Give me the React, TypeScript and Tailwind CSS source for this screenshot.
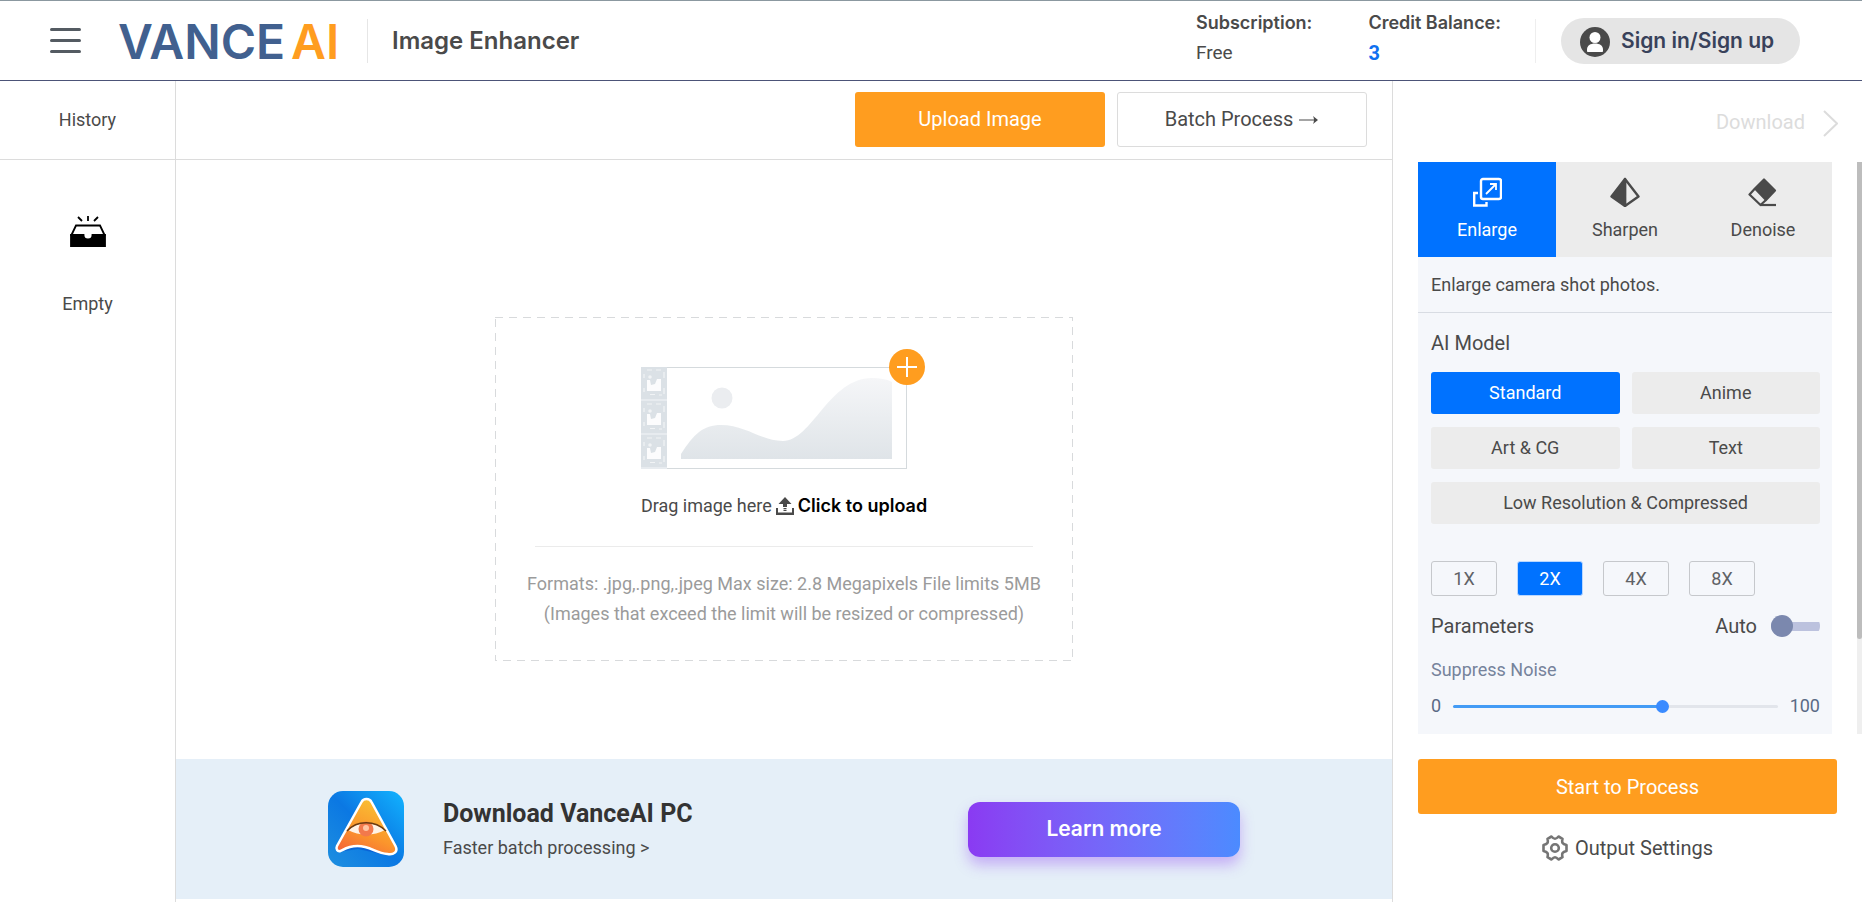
import { useState } from "react"

const headingFont = "font-['Inter',sans-serif]"

const tools = [
  { name: "Enlarge", Icon: EnlargeIcon },
  { name: "Sharpen", Icon: SharpenIcon },
  { name: "Denoise", Icon: DenoiseIcon },
]

const models = ["Standard", "Anime", "Art & CG", "Text", "Low Resolution & Compressed"]
const scales = ["1X", "2X", "4X", "8X"]

function EnlargeIcon() {
  return (
    <svg className="size-[30px]" viewBox="0 0 30 30" fill="none" stroke="currentColor" strokeWidth="2.400">
      <rect x="9" y="2" width="20" height="20" rx="2" />
      <path d="M6 16H2.200v12.500h12.300V25" />
      <path d="M14 17 24 7M18 7h6v6" strokeWidth="1.800" />
    </svg>
  )
}

function SharpenIcon() {
  return (
    <svg className="size-[30px]" viewBox="0 0 30 30" stroke="currentColor" strokeWidth="2.400" strokeLinejoin="round">
      <path d="M15 2 1.500 19.500 15 29Z" fill="currentColor" />
      <path d="M15 2l13.500 17.500L15 29Z" fill="none" />
    </svg>
  )
}

function DenoiseIcon() {
  return (
    <svg className="size-[30px]" viewBox="0 0 30 30" fill="none" stroke="currentColor" strokeWidth="2.200" strokeLinejoin="round">
      <path d="M16 2.500 27 13.500 18 23 7 11.500Z" fill="currentColor" />
      <path d="M7 11.500 1.500 17.500 12.500 28l5.500-5" />
      <path d="M12.500 28H28" />
    </svg>
  )
}

function InboxIcon() {
  return (
    <svg className="size-9" viewBox="0 0 36 36" fill="none" stroke="#000" strokeWidth="1.800">
      <path d="M1 19v11h34V19H22.500c0 6-9 6-9 0Z" fill="#000" />
      <path d="M1 20 6 9.500h24L35 20" />
      <path d="M18 -1v6M8 1l4 4M28 1l-4 4" />
    </svg>
  )
}

function UserIcon() {
  return (
    <svg className="mt-[3px] size-[30px] text-[#4a4a4a]" viewBox="0 0 30 30">
      <circle cx="15" cy="15" r="15" fill="currentColor" />
      <circle cx="15" cy="10.500" r="5.500" fill="#fff" />
      <path d="M7 24v-1.500c0-4 3.500-6 8-6s8 2 8 6V24c0 .700-.500 1-1 1H8c-.500 0-1-.300-1-1Z" fill="#fff" />
    </svg>
  )
}

function UploadIcon() {
  return (
    <svg className="size-[18px] text-[#4a4a4a]" viewBox="0 0 18 18" fill="currentColor">
      <path d="M9 0 15.500 7H11v3H7V7H2.500Z" />
      <path d="M7.500 11h3v1.200h-3zM7.500 13h3v1h-3z" />
      <path d="M0 11h2v4.500h14V11h2v7H0Z" />
    </svg>
  )
}

function GearIcon() {
  return (
    <svg className="size-[26px]" viewBox="0 0 26 26" fill="none" stroke="#757575" strokeWidth="2.600" strokeLinejoin="round">
      <path d="M9.500 1.500q2 2.300 3.500 2.300t3.500-2.300l4 2.300q-.700 3 .100 4.200t3.900 2v6q-3.100.800-3.900 2t-.100 4.200l-4 2.300q-2-2.300-3.500-2.300t-3.500 2.300l-4-2.300q.700-3-.100-4.200t-3.900-2v-6q3.100-.800 3.900-2t.100-4.200Z" />
      <circle cx="13" cy="13" r="3.800" />
    </svg>
  )
}

function FilmFrame({ y }: { y: number }) {
  return (
    <g transform={`translate(0 ${y})`} fill="#fff">
      <path d="M0 33.500h26v1H0z" opacity=".7" />
      <path d="M6 14h3l1 5 4-1 2-5h4v12H6z" opacity=".9" />
      <circle cx="9" cy="11" r="1.800" opacity=".6" />
      <path d="M6 4h5M15 4h5M3 8v4M3 22v4M23 6v6M23 22v6M9 28.500h5M18 29h3" fill="none" stroke="#fff" strokeWidth="1.200" opacity=".6" />
    </g>
  )
}

function PictureArt() {
  return (
    <svg className="h-[121px] w-[286px]" viewBox="0 0 286 121">
      <defs>
        <linearGradient id="hill" x1="0" y1="0" x2="0" y2="1">
          <stop offset="0" stopColor="#f5f6f8" />
          <stop offset="1" stopColor="#dfe4e8" />
        </linearGradient>
      </defs>
      <rect x=".5" y="18.500" width="265" height="101" fill="#fff" stroke="#d5dadd" />
      <rect y="18" width="26" height="102" fill="#dbe1e6" />
      <FilmFrame y={17} />
      <FilmFrame y={51} />
      <FilmFrame y={85} />
      <circle cx="81" cy="49" r="10.500" fill="#ebedf0" />
      <path d="M40 110v-5C53 85 62 76 80 76c25 0 40 16 62 16 29 0 46-63 89-63 8 0 14 1 20 4v77Z" fill="url(#hill)" />
      <circle cx="266" cy="18" r="18" fill="#ff9d1f" />
      <path d="M256 18h20M266 8v20" stroke="#fff" strokeWidth="2" />
    </svg>
  )
}

function AppLogo() {
  return (
    <svg className="size-[76px]" viewBox="0 0 76 76">
      <defs>
        <linearGradient id="tile" x1="0" y1="1" x2="1" y2="0">
          <stop offset="0" stopColor="#1e8fe0" />
          <stop offset=".5" stopColor="#0b78e3" />
          <stop offset="1" stopColor="#12b4ff" />
        </linearGradient>
        <linearGradient id="peak" x1="0.100" y1="1" x2=".6" y2="0">
          <stop offset="0" stopColor="#f4603a" />
          <stop offset=".45" stopColor="#fb952c" />
          <stop offset="1" stopColor="#f9c034" />
        </linearGradient>
      </defs>
      <rect width="76" height="76" rx="15" fill="url(#tile)" />
      <path d="M45 12 67 54 58 64 30 58 10 61Z" fill="#0649c9" opacity=".5" />
      <path
        d="M33.500 11c2-4 8-4 10 0l24 44c3 6-2 9-8 8-12-1-17-8-30-8-9 0-13 3-17 5-3 1-5-2-3.500-5Z"
        fill="url(#peak)"
        stroke="#fff"
        strokeWidth="2.500"
      />
      <path d="M20 39c10-9 26-9 37 0-11 6-26 6-37 0Z" fill="#fff2e5" />
      <circle cx="38" cy="38" r="7.500" fill="#f2794c" />
      <circle cx="38" cy="37" r="3" fill="#ffc5a3" />
      <path d="M19 40c10-11 28-11 39 0" fill="none" stroke="#6b3b12" strokeWidth="1.500" />
    </svg>
  )
}

function Header() {
  return (
    <header className="flex h-[81px] items-center border-t border-b border-t-[#8b98a0] border-b-[#4c5478] pr-[62px] pl-[50px]">
      <button aria-label="Menu" className="flex w-[31px] flex-col gap-2">
        <span className="h-[3px] rounded-full bg-[#545b62]" />
        <span className="h-[3px] rounded-full bg-[#545b62]" />
        <span className="h-[3px] rounded-full bg-[#545b62]" />
      </button>
      <a href="#" className={`ml-[37px] flex w-[225px] gap-[6px] pt-[2px] text-[48px] leading-none font-semibold text-[#41608f] ${headingFont}`}>
        <span>VANCE</span>
        <span className="text-[#ff9d1f]">AI</span>
      </a>
      <div className="ml-6 h-[44px] w-px bg-[#e6e6e6]" />
      <h1 className={`ml-6 text-[24px] font-semibold ${headingFont}`}>Image Enhancer</h1>
      <div className="ml-auto flex items-center">
        <dl className="flex gap-14 pb-[6px]">
          <div>
            <dt className={`text-[18px] leading-[30px] font-semibold ${headingFont}`}>Subscription:</dt>
            <dd className="text-[19px] leading-[30px]">Free</dd>
          </div>
          <div>
            <dt className={`text-[18px] leading-[30px] font-semibold ${headingFont}`}>Credit Balance:</dt>
            <dd className="text-[20px] leading-[30px] font-bold text-[#0f6ff0]">3</dd>
          </div>
        </dl>
        <div className="ml-[34px] h-[44px] w-px bg-[#eee]" />
        <button className="ml-[25px] flex h-[46px] w-[239px] items-center gap-[11px] rounded-full bg-[#e5e5e5] pl-[19px]">
          <UserIcon />
          <span className={`text-[21px] font-semibold text-[#38415a] ${headingFont}`}>Sign in/Sign up</span>
        </button>
      </div>
    </header>
  )
}

function History() {
  return (
    <aside className="w-44 shrink-0 border-r border-[#dcdcdc] text-center text-[18px]">
      <h2 className="flex h-[79px] items-center justify-center border-b border-[#dcdcdc] pb-[2px]">History</h2>
      <div className="flex flex-col items-center gap-10 pt-14">
        <InboxIcon />
        <p className="leading-6">Empty</p>
      </div>
    </aside>
  )
}

function DropZone() {
  return (
    <div className="relative flex w-[578px] flex-col items-center px-10 pt-8 pb-8">
      <svg aria-hidden="true" className="pointer-events-none absolute inset-0 h-full w-full">
        <rect width="100%" height="100%" fill="none" stroke="#d8dadc" strokeWidth="2" strokeDasharray="8 6" />
      </svg>
      <PictureArt />
      <label className="mt-5 flex cursor-pointer items-center gap-1 text-[18px] leading-8">
        Drag image here
        <UploadIcon />
        <span className={`font-semibold text-black ${headingFont}`}>Click to upload</span>
        <input type="file" className="sr-only" />
      </label>
      <div className="mt-6 flex w-full flex-col items-center border-t border-[#ebebeb] pt-[22px] text-[18px] leading-[30px] whitespace-nowrap text-[#9b9b9b]">
        <p>Formats: .jpg,.png,.jpeg Max size: 2.8 Megapixels File limits 5MB</p>
        <p>(Images that exceed the limit will be resized or compressed)</p>
      </div>
    </div>
  )
}

function Workspace() {
  return (
    <main className="flex min-w-0 flex-1 flex-col pb-[3px]">
      <div className="flex h-[79px] shrink-0 items-center justify-end gap-3 border-b border-[#dcdcdc] pr-[25px] pb-[2px] text-[20px]">
        <button className="h-[55px] w-[250px] rounded-[3px] bg-[#ff9d1f] text-white">Upload Image</button>
        <button className="flex h-[55px] w-[250px] items-center justify-center gap-[6px] rounded-[3px] border border-[#dcdcdc]">
          Batch Process
          <svg className="h-3 w-5" viewBox="0 0 20 12" fill="none" stroke="currentColor">
            <path d="M0 7h18" />
            <path d="M14 3 19 7l-5 4Q16 7 14 3Z" fill="currentColor" stroke="none" />
          </svg>
        </button>
      </div>
      <div className="flex flex-1 items-center justify-center pt-[59px]">
        <DropZone />
      </div>
      <section className="flex h-[140px] items-center bg-[#e5eff8] px-[152px]">
        <AppLogo />
        <div className="ml-[39px]">
          <h2 className="text-[25px] leading-8 font-bold text-[#333]">Download VanceAI PC</h2>
          <a href="#" className="mt-[6px] block text-[18px] leading-6">Faster batch processing &gt;</a>
        </div>
        <button className={`ml-auto h-[55px] w-[272px] rounded-xl bg-linear-to-r from-[#8a3af2] to-[#4b8bff] text-[21px] font-semibold text-white shadow-[0_8px_14px_rgba(138,58,242,0.35)] ${headingFont}`}>
          Learn more
        </button>
      </section>
    </main>
  )
}

function Settings() {
  const [tool, setTool] = useState("Enlarge")
  const [model, setModel] = useState("Standard")
  const [scale, setScale] = useState("2X")
  const [auto, setAuto] = useState(false)
  const [noise, setNoise] = useState(65)

  return (
    <aside className="flex w-[470px] shrink-0 flex-col border-l border-[#dcdcdc] pl-[25px]">
      <button disabled className="flex h-[81px] items-center justify-end gap-[18px] pr-6 text-[20px] text-[#dcdcdc]">
        Download
        <svg className="mt-1 h-[27px] w-[15px]" viewBox="0 0 15 27" fill="none" stroke="currentColor" strokeWidth="2">
          <path d="M1 1 14 13.500 1 26" />
        </svg>
      </button>
      <div className="flex flex-1 justify-between">
        <div className="w-[414px] bg-[#f5f7fb]">
          <div className="grid grid-cols-3 bg-[#ececec]">
            {tools.map(({ name, Icon }) => (
              <button
                key={name}
                onClick={() => setTool(name)}
                className={`flex h-[95px] flex-col items-center pt-[15px] text-[18px] ${
                  tool === name ? "bg-[#0072ff] text-white" : ""
                }`}
              >
                <Icon />
                <span className="mt-[11px] leading-6">{name}</span>
              </button>
            ))}
          </div>
          <p className="flex h-14 items-center border-b border-[#d8dce3] px-[13px] text-[18px]">Enlarge camera shot photos.</p>
          <div className="pt-4 pr-3 pl-[13px]">
            <h2 className="text-[20px] leading-7">AI Model</h2>
            <div className="mt-[15px] grid grid-cols-2 gap-x-3 gap-y-[13px] text-[18px]">
              {models.map((name) => (
                <button
                  key={name}
                  onClick={() => setModel(name)}
                  className={`h-[42px] rounded-[3px] pb-[2px] last:col-span-2 ${
                    model === name ? "bg-[#0072ff] text-white" : "bg-[#ececec]"
                  }`}
                >
                  {name}
                </button>
              ))}
            </div>
            <div className="mt-[37px] flex gap-5 text-[18px]">
              {scales.map((name) => (
                <button
                  key={name}
                  onClick={() => setScale(name)}
                  className={`h-[35px] w-[66px] rounded-[3px] border ${
                    scale === name ? "border-[#b9d7ff] bg-[#0072ff] text-white" : "border-[#c6c8cc] text-[#606266]"
                  }`}
                >
                  {name}
                </button>
              ))}
            </div>
            <div className="mt-4 flex items-center text-[20px] leading-7">
              <h2>Parameters</h2>
              <label className="ml-auto flex items-center gap-[14px]">
                Auto
                <input
                  type="checkbox"
                  role="switch"
                  checked={auto}
                  onChange={(e) => setAuto(e.target.checked)}
                  className="flex h-[22px] w-[49px] appearance-none items-center rounded-full bg-linear-to-r from-[#bcc2de] to-[#bcc2de] bg-[length:100%_9px] bg-center bg-no-repeat before:size-[22px] before:rounded-full before:bg-[#7b88ae] checked:justify-end"
                />
              </label>
            </div>
            <label htmlFor="noise" className="mt-[18px] block text-[18px] leading-6 text-[#76839b]">
              Suppress Noise
            </label>
            <div className="mt-3 flex items-center gap-3 text-[18px] leading-6 text-[#5a6a85]">
              <span>0</span>
              <div className="flex h-[13px] flex-1 items-center">
                <div className="h-[3px] rounded-l-full bg-[#439bf5]" style={{ width: `${noise}%` }} />
                <div className="h-[3px] flex-1 rounded-r-full bg-[#e2e5eb]" />
                <input
                  id="noise"
                  type="range"
                  min={0}
                  max={100}
                  value={noise}
                  onChange={(e) => setNoise(Number(e.target.value))}
                  className="-ml-[100%] h-[13px] w-full appearance-none bg-transparent [&::-webkit-slider-thumb]:size-[13px] [&::-webkit-slider-thumb]:appearance-none [&::-webkit-slider-thumb]:rounded-full [&::-webkit-slider-thumb]:bg-[#3a8bff]"
                />
              </div>
              <span>100</span>
            </div>
          </div>
        </div>
        <div className="w-[5px] bg-[#efefef]">
          <div className="h-5/6 rounded-b-full bg-[#bdbdbd]" />
        </div>
      </div>
      <div className="flex flex-col items-center pt-[25px] pr-[25px] pb-10 text-[20px]">
        <button className="h-[55px] w-full rounded-[3px] bg-[#ff9d1f] text-white">Start to Process</button>
        <button className="mt-5 flex items-center gap-[7px] leading-7">
          <GearIcon />
          Output Settings
        </button>
      </div>
    </aside>
  )
}

export default function App() {
  return (
    <div className="flex min-h-screen flex-col bg-white font-['Roboto',sans-serif] text-[#4a4a4a]">
      <Header />
      <div className="flex flex-1">
        <History />
        <Workspace />
        <Settings />
      </div>
    </div>
  )
}
